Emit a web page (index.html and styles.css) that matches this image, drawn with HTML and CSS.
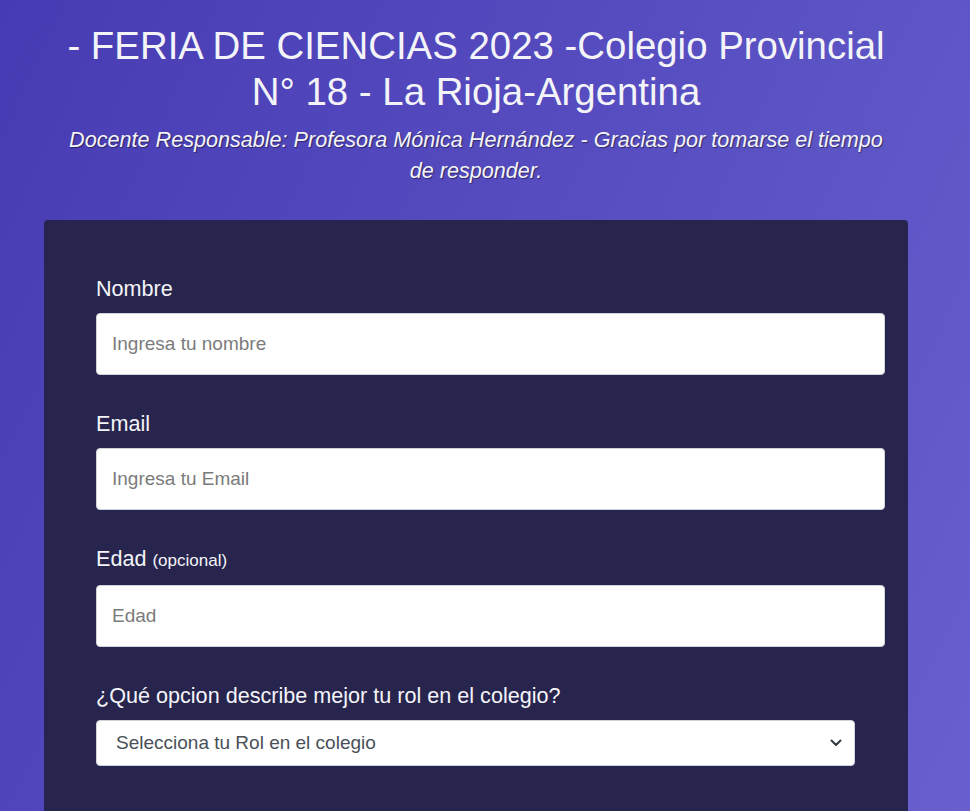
FILE: index.html
```html
<!DOCTYPE html>
<html lang="es">
<head>
<meta charset="utf-8">
<title>Feria de Ciencias 2023</title>
<link rel="stylesheet" href="styles.css">
</head>
<body>
<div class="page">
  <header class="header">
    <h1 class="title">- FERIA DE CIENCIAS 2023 -Colegio Provincial N° 18 - La Rioja-Argentina</h1>
    <p class="description">Docente Responsable: Profesora Mónica Hernández - Gracias por tomarse el tiempo de responder.</p>
  </header>
  <form class="card">
    <div class="group">
      <label class="label" for="name">Nombre</label>
      <input class="field" id="name" type="text" placeholder="Ingresa tu nombre">
    </div>
    <div class="group">
      <label class="label" for="email">Email</label>
      <input class="field" id="email" type="email" placeholder="Ingresa tu Email">
    </div>
    <div class="group">
      <label class="label" for="age">Edad <span class="clue">(opcional)</span></label>
      <input class="field" id="age" type="number" placeholder="Edad">
    </div>
    <div class="group">
      <label class="label" for="role">¿Qué opcion describe mejor tu rol en el colegio?</label>
      <div class="select">
        <span class="select-text">Selecciona tu Rol en el colegio</span>
        <svg class="chev" width="12" height="8" viewBox="0 0 12 8"><path d="M1.5 1.5 L6 6 L10.5 1.5" fill="none" stroke="#343a40" stroke-width="2" stroke-linecap="round" stroke-linejoin="round"/></svg>
      </div>
    </div>
  </form>
</div>
</body>
</html>
```
FILE: styles.css
```css
html, body {
  margin: 0;
  padding: 0;
}
body {
  height: 811px;
  font-family: "Liberation Sans", Arial, sans-serif;
  color: #f3f3f3;
  background: linear-gradient(115deg, #473bb3 0%, #5a51c3 60%, #6860ce 100%);
  overflow: hidden;
}
.page {
  width: 952px;
}
.header {
  padding: 23px 60px 0;
  text-align: center;
}
.title {
  margin: 0;
  font-size: 38.4px;
  font-weight: 400;
  line-height: 45.6px;
  color: #f4f4f8;
}
.description {
  margin: 10px 0 0;
  font-size: 21.6px;
  font-style: italic;
  line-height: 31px;
  text-shadow: 1px 1px 1px rgba(0,0,0,0.45);
  color: #f4f4f8;
}
.card {
  margin: 34px 0 0 44px;
  width: 864px;
  box-sizing: border-box;
  padding: 56px 23px 0 52px;
  height: 600px;
  background: #27254d;
  border-radius: 4px;
  display: flex;
  flex-direction: column;
  gap: 36px;
}
.group {
  display: flex;
  flex-direction: column;
  gap: 11px;
}
.label {
  font-size: 21.6px;
  line-height: 26px;
  color: #f4f4f8;
}
.clue {
  font-size: 17px;
}
.field {
  height: 62px;
  box-sizing: border-box;
  border: 1px solid #ced4da;
  border-radius: 4px;
  padding: 0 15px;
  font-family: "Liberation Sans", Arial, sans-serif;
  font-size: 19px;
  color: #495057;
  background: #fff;
  outline: none;
}
.field::placeholder {
  color: #7b7b7b;
}
.select {
  width: 759px;
  height: 46px;
  box-sizing: border-box;
  border: 1px solid #ced4da;
  border-radius: 4px;
  background: #fff;
  padding: 0 12px 0 19px;
  display: flex;
  align-items: center;
  justify-content: space-between;
  font-size: 19px;
  color: #495057;
}
.chev {
  display: block;
}
```
